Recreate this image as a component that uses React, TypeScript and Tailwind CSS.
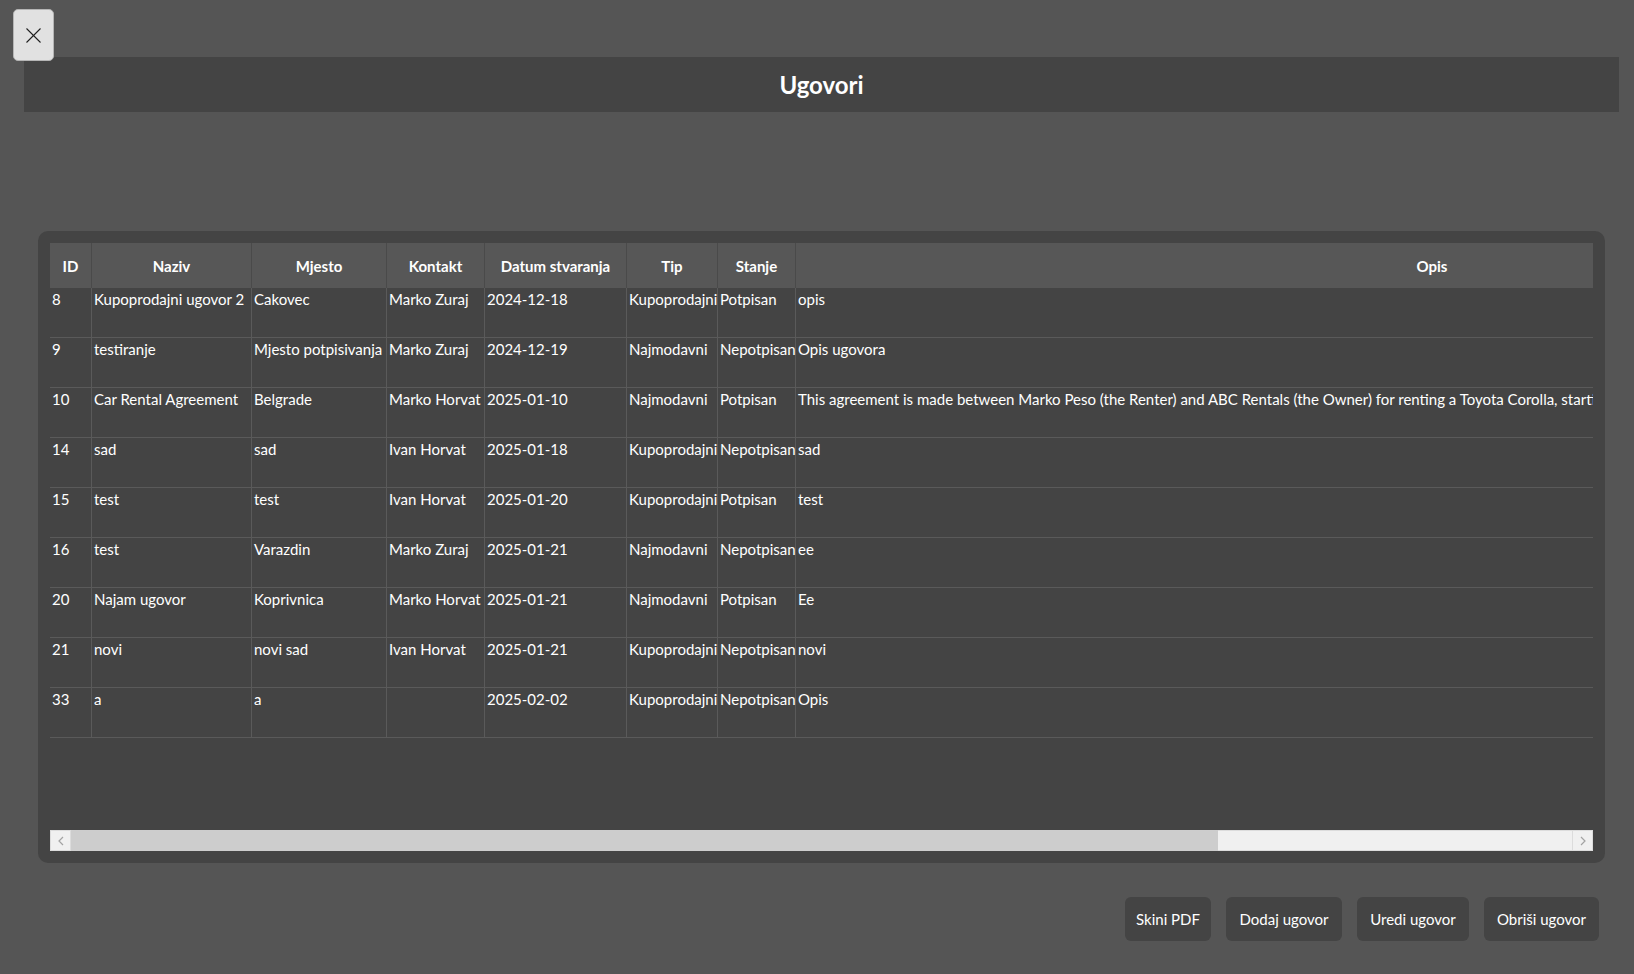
import React from 'react';

interface Ugovor {
  id: number;
  naziv: string;
  mjesto: string;
  kontakt: string;
  datum: string;
  tip: string;
  stanje: string;
  opis: string;
}

const ugovori: Ugovor[] = [
  { id: 8, naziv: 'Kupoprodajni ugovor 2', mjesto: 'Cakovec', kontakt: 'Marko Zuraj', datum: '2024-12-18', tip: 'Kupoprodajni', stanje: 'Potpisan', opis: 'opis' },
  { id: 9, naziv: 'testiranje', mjesto: 'Mjesto potpisivanja', kontakt: 'Marko Zuraj', datum: '2024-12-19', tip: 'Najmodavni', stanje: 'Nepotpisan', opis: 'Opis ugovora' },
  {
    id: 10,
    naziv: 'Car Rental Agreement',
    mjesto: 'Belgrade',
    kontakt: 'Marko Horvat',
    datum: '2025-01-10',
    tip: 'Najmodavni',
    stanje: 'Potpisan',
    opis: 'This agreement is made between Marko Peso (the Renter) and ABC Rentals (the Owner) for renting a Toyota Corolla, starting on January 15, 2025 and ending on January 22, 2025.'
  },
  { id: 14, naziv: 'sad', mjesto: 'sad', kontakt: 'Ivan Horvat', datum: '2025-01-18', tip: 'Kupoprodajni', stanje: 'Nepotpisan', opis: 'sad' },
  { id: 15, naziv: 'test', mjesto: 'test', kontakt: 'Ivan Horvat', datum: '2025-01-20', tip: 'Kupoprodajni', stanje: 'Potpisan', opis: 'test' },
  { id: 16, naziv: 'test', mjesto: 'Varazdin', kontakt: 'Marko Zuraj', datum: '2025-01-21', tip: 'Najmodavni', stanje: 'Nepotpisan', opis: 'ee' },
  { id: 20, naziv: 'Najam ugovor', mjesto: 'Koprivnica', kontakt: 'Marko Horvat', datum: '2025-01-21', tip: 'Najmodavni', stanje: 'Potpisan', opis: 'Ee' },
  { id: 21, naziv: 'novi', mjesto: 'novi sad', kontakt: 'Ivan Horvat', datum: '2025-01-21', tip: 'Kupoprodajni', stanje: 'Nepotpisan', opis: 'novi' },
  { id: 33, naziv: 'a', mjesto: 'a', kontakt: '', datum: '2025-02-02', tip: 'Kupoprodajni', stanje: 'Nepotpisan', opis: 'Opis' }
];

const headers = ['ID', 'Naziv', 'Mjesto', 'Kontakt', 'Datum stvaranja', 'Tip', 'Stanje', 'Opis'];
const widths = ['w-[42px]', 'w-[160px]', 'w-[135px]', 'w-[98px]', 'w-[142px]', 'w-[91px]', 'w-[78px]', 'w-[1272px]'];

const Chevron: React.FC<{ dir: 'left' | 'right' }> = ({ dir }) => (
  <svg width="6" height="10" viewBox="0 0 6 10" fill="none">
    <polyline
      points={dir === 'left' ? '5,1 1,5 5,9' : '1,1 5,5 1,9'}
      stroke="#a3a3a3"
      strokeWidth="1.2"
    />
  </svg>
);

const App: React.FC = () => {
  const cell = 'border-r border-b border-[#5a5a5a] px-[2px] pt-[1px] align-top whitespace-nowrap h-[50px]';

  return (
    <div className="relative min-h-screen bg-[#555555] font-['Lato','Segoe_UI',sans-serif] text-white overflow-hidden">
      <button className="absolute left-[13px] top-[9px] w-[41px] h-[52px] flex items-center justify-center bg-[#e1e1e1] border border-[#b5b5b5] rounded-[5px] z-10">
        <svg width="15" height="15" viewBox="0 0 15 15">
          <line x1="0.5" y1="0.5" x2="14.5" y2="14.5" stroke="#1f1f1f" strokeWidth="1.1" />
          <line x1="14.5" y1="0.5" x2="0.5" y2="14.5" stroke="#1f1f1f" strokeWidth="1.1" />
        </svg>
      </button>

      <div className="mt-[57px] ml-[24px] mr-[15px] h-[55px] bg-[#444444] flex items-center justify-center">
        <h2 className="text-[24px] font-bold">Ugovori</h2>
      </div>

      <div className="mt-[119px] ml-[38px] mr-[29px] p-3 rounded-[10px] bg-[#444444]">
        <div className="h-[587px] overflow-hidden">
          <table className="table-fixed w-[2018px] border-separate border-spacing-0 text-[15px] leading-5">
            <colgroup>
              {widths.map((w, i) => (
                <col key={i} className={w} />
              ))}
            </colgroup>
            <thead>
              <tr>
                {headers.map((h, i) => (
                  <th
                    key={h}
                    className={`h-[45px] bg-[#575757] font-bold text-center ${i < headers.length - 1 ? 'border-r border-[#4a4a4a]' : ''}`}
                  >
                    {h}
                  </th>
                ))}
              </tr>
            </thead>
            <tbody>
              {ugovori.map((u) => (
                <tr key={u.id}>
                  <td className={cell}>{u.id}</td>
                  <td className={cell}>{u.naziv}</td>
                  <td className={cell}>{u.mjesto}</td>
                  <td className={cell}>{u.kontakt}</td>
                  <td className={cell}>{u.datum}</td>
                  <td className={cell}>{u.tip}</td>
                  <td className={cell}>{u.stanje}</td>
                  <td className="border-b border-[#5a5a5a] px-[2px] pt-[1px] align-top whitespace-nowrap h-[50px]">{u.opis}</td>
                </tr>
              ))}
            </tbody>
          </table>
        </div>

        {/* horizontal scrollbar */}
        <div className="flex h-[21px]">
          <div className="w-[21px] flex items-center justify-center bg-[#f0f0f0] border border-[#dcdcdc]">
            <Chevron dir="left" />
          </div>
          <div className="w-[1147px] bg-[#cdcdcd]" />
          <div className="flex-1 bg-[#f0f0f0] border-y border-[#dcdcdc]" />
          <div className="w-[21px] flex items-center justify-center bg-[#f0f0f0] border border-[#dcdcdc]">
            <Chevron dir="right" />
          </div>
        </div>
      </div>

      <div className="mt-[34px] mr-[35px] flex justify-end gap-[15px] text-[15px]">
        <button className="w-[86px] h-[44px] rounded-md bg-[#444444] text-white">Skini PDF</button>
        <button className="w-[116px] h-[44px] rounded-md bg-[#444444] text-white">Dodaj ugovor</button>
        <button className="w-[112px] h-[44px] rounded-md bg-[#444444] text-white">Uredi ugovor</button>
        <button className="w-[115px] h-[44px] rounded-md bg-[#444444] text-white">Obriši ugovor</button>
      </div>
    </div>
  );
};

export default App;
